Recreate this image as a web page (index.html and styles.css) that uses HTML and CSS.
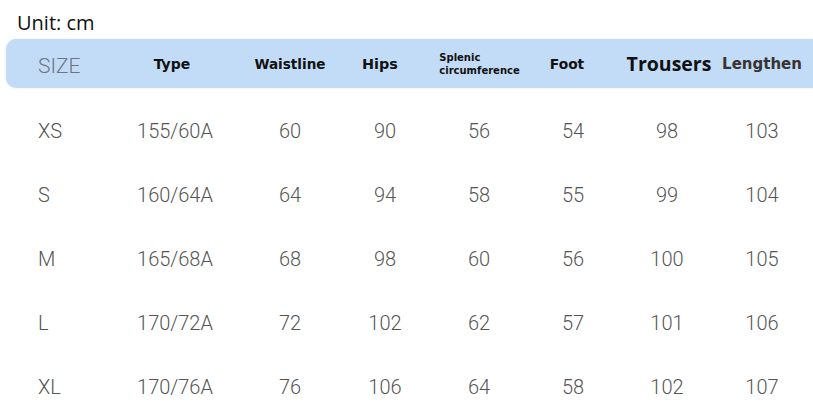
FILE: index.html
```html
<!DOCTYPE html>
<html>
<head>
<meta charset="utf-8">
<link rel="stylesheet" href="styles.css">
</head>
<body>
<div class="unit">Unit: cm</div>
<div class="table">
  <div class="head grid">
    <div class="c size-h">SIZE</div>
    <div class="c h type-h">Type</div>
    <div class="c h">Waistline</div>
    <div class="c h hips-h">Hips</div>
    <div class="c"><div class="h splenic">Splenic<br>circumference</div></div>
    <div class="c h foot-h">Foot</div>
    <div class="c trousers">Trousers</div>
    <div class="c h lengthen">Lengthen</div>
  </div>
  <div class="row grid"><div class="c s">XS</div><div class="c">155/60A</div><div class="c">60</div><div class="c">90</div><div class="c">56</div><div class="c">54</div><div class="c">98</div><div class="c">103</div></div>
  <div class="row grid"><div class="c s">S</div><div class="c">160/64A</div><div class="c">64</div><div class="c">94</div><div class="c">58</div><div class="c">55</div><div class="c">99</div><div class="c">104</div></div>
  <div class="row grid"><div class="c s">M</div><div class="c">165/68A</div><div class="c">68</div><div class="c">98</div><div class="c">60</div><div class="c">56</div><div class="c">100</div><div class="c">105</div></div>
  <div class="row grid"><div class="c s">L</div><div class="c">170/72A</div><div class="c">72</div><div class="c">102</div><div class="c">62</div><div class="c">57</div><div class="c">101</div><div class="c">106</div></div>
  <div class="row grid"><div class="c s">XL</div><div class="c">170/76A</div><div class="c">76</div><div class="c">106</div><div class="c">64</div><div class="c">58</div><div class="c">102</div><div class="c">107</div></div>
</div>
</body>
</html>
```
FILE: styles.css
```css
html, body {
  margin: 0;
  padding: 0;
  background: #fff;
  overflow: hidden;
}
body {
  width: 813px;
  height: 420px;
}
.unit {
  font-family: "Open Sans", sans-serif;
  font-size: 20px;
  line-height: 27px;
  color: #111;
  padding: 9px 0 0 17px;
  height: 27px;
}
.table {
  margin-top: 3px;
}
.grid {
  display: grid;
  grid-template-columns: 82px 110px 120px 70px 118px 70px 118px 72px;
  align-items: center;
  padding-left: 38px;
}
.head {
  height: 49px;
  margin-left: 6px;
  padding-left: 32px;
  background: #c2dcf7;
  border-radius: 10px 0 0 10px;
  box-shadow: 0 0 2px #d6e7f9;
}
.c {
  text-align: center;
  display: flex;
  justify-content: center;
}
.size-h {
  justify-content: flex-start;
  font-family: Roboto, sans-serif;
  font-weight: 300;
  font-size: 21px;
  color: #6e7480;
  padding-top: 4px;
}
.h {
  font-family: "DejaVu Sans", sans-serif;
  font-weight: bold;
  font-size: 13.6px;
  color: #111;
  padding-top: 1px;
}
.type-h { padding-right: 6px; font-size: 14px; }
.hips-h { padding-right: 10px; font-size: 14.4px; }
.foot-h { padding-right: 12px; font-size: 13.8px; }
.splenic {
  font-size: 10px;
  line-height: 13px;
  text-align: left;
  padding-top: 0;
  margin-left: 1px;
}
.trousers {
  font-family: "Open Sans", sans-serif;
  font-weight: 700;
  font-size: 19.5px;
  color: #111;
  padding-left: 4px;
}
.lengthen {
  font-size: 15px;
  color: #3a3232;
}
.table > .row:first-of-type { margin-top: 11px; }
.row {
  height: 64px;
  font-family: Roboto, sans-serif;
  font-weight: 300;
  font-size: 20px;
  color: #555;
}
.head + .row {
  margin-top: 11px;
}
.s {
  justify-content: flex-start;
}
```
